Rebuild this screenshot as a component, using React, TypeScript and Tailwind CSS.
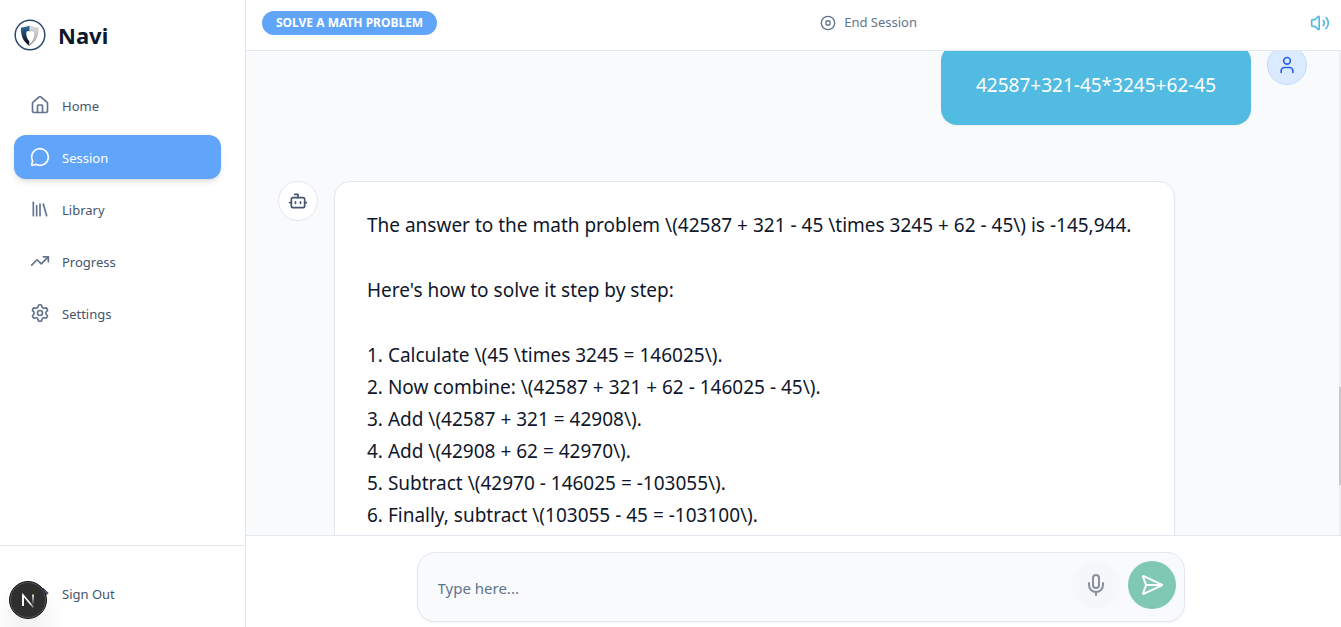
import { useState } from 'react'
import type { LucideIcon } from 'lucide-react'
import {
  Bot,
  CircleStop,
  House,
  Library,
  LogOut,
  MessageCircle,
  Mic,
  SendHorizontal,
  Settings,
  TrendingUp,
  User,
  Volume2,
} from 'lucide-react'

interface NavItem {
  name: string
  icon: LucideIcon
  href: string
}

const NAV_ITEMS: NavItem[] = [
  { name: 'Home', icon: House, href: '#home' },
  { name: 'Session', icon: MessageCircle, href: '#session' },
  { name: 'Library', icon: Library, href: '#library' },
  { name: 'Progress', icon: TrendingUp, href: '#progress' },
  { name: 'Settings', icon: Settings, href: '#settings' },
]

const STEPS = [
  '1. Calculate \\(45 \\times 3245 = 146025\\).',
  '2. Now combine: \\(42587 + 321 + 62 - 146025 - 45\\).',
  '3. Add \\(42587 + 321 = 42908\\).',
  '4. Add \\(42908 + 62 = 42970\\).',
  '5. Subtract \\(42970 - 146025 = -103055\\).',
  '6. Finally, subtract \\(103055 - 45 = -103100\\).',
]

function Logo() {
  return (
    <svg className="w-8 h-8" viewBox="0 0 32 32" fill="none" aria-hidden="true">
      <defs>
        <linearGradient id="shield-left" x1="0" y1="0" x2="0" y2="1">
          <stop offset="0" stopColor="#2f6f9f" />
          <stop offset="0.4" stopColor="#1f4467" />
          <stop offset="0.75" stopColor="#10172f" />
        </linearGradient>
        <linearGradient id="shield-right" x1="0" y1="0" x2="0" y2="1">
          <stop offset="0" stopColor="#dcdcdc" />
          <stop offset="1" stopColor="#a0a0a0" />
        </linearGradient>
      </defs>
      <circle cx="16" cy="16" r="14.8" stroke="#2b4a6b" strokeWidth="1.5" />
      <path d="M15.6 6.6c-2.4 1.2-5.2 1.8-8.6 1.8-.3 7.6 1.6 13.4 8.4 18.6z" fill="url(#shield-left)" />
      <path d="M16 6.6c2.4 1.2 5.2 1.8 8.6 1.8.3 7.6-1.6 13.4-9.2 18.6z" fill="url(#shield-right)" />
      <path
        d="M16 12.8c-1-1-2.600-1-3.600.2-.5 4 .8 7.200 3.300 9.600l-.2 2.600c3.600-3 5.200-7 4.700-12-1-1.300-3.200-1.400-4.200-.4z"
        fill="white"
      />
    </svg>
  )
}

function Sidebar() {
  return (
    <aside className="flex flex-col shrink-0 w-[246px] bg-white border-r border-slate-200">
      <div className="flex items-center gap-3 pl-[14px] pt-[19px]">
        <Logo />
        <span className="text-[22px] leading-8 font-bold text-slate-900">Navi</span>
      </div>

      <nav className="flex flex-col gap-2 pl-[14px] pr-6 mt-8">
        {NAV_ITEMS.map(({ name, icon: Icon, href }) => (
          <a
            key={href}
            href={href}
            className={
              name === 'Session'
                ? 'flex items-center gap-3 h-11 px-4 rounded-xl text-[13px] text-white bg-[#60a5fa] shadow-md'
                : 'flex items-center gap-3 h-11 px-4 rounded-xl text-[13px] text-slate-600 hover:bg-slate-50'
            }
          >
            <Icon className={name === 'Session' ? 'w-5 h-5' : 'w-5 h-5 text-slate-500'} />
            <span className="pt-[3px]">{name}</span>
          </a>
        ))}
      </nav>

      <div className="mt-auto pl-[14px] pr-6 pt-[25px] pb-3 border-t border-slate-200">
        <button className="flex items-center gap-3 w-full h-11 px-4 rounded-xl text-[13px] text-slate-600">
          <LogOut className="w-5 h-5" />
          <span className="pt-[3px]">Sign Out</span>
        </button>
      </div>
    </aside>
  )
}

function Header() {
  return (
    <header className="flex items-center justify-between shrink-0 h-[51px] pl-4 pr-px pb-1 bg-white border-b border-slate-200">
      <span className="px-3.5 rounded-full bg-[#60a5fa] text-xs leading-6 font-bold text-white">
        SOLVE A MATH PROBLEM
      </span>
      <button className="flex items-center gap-2 text-[13px] text-slate-500">
        <CircleStop className="w-4 h-4" />
        End Session
      </button>
      <button className="flex items-center justify-center w-10 h-10 text-[#52bbe1]" aria-label="Toggle sound">
        <Volume2 className="w-5 h-5" />
      </button>
    </header>
  )
}

function Conversation() {
  return (
    <main className="relative flex-1 min-h-0 overflow-hidden pl-8 pr-[34px] bg-slate-50">
      {/* User message, scrolled partly under the header */}
      <div className="flex justify-end gap-4 -mt-1.5">
        <div className="min-w-[310px] px-8 py-6 rounded-2xl bg-[#52bbe1] text-[19px] leading-8 text-center text-white shadow-xs">
          42587+321-45*3245+62-45
        </div>
        <div className="flex items-center justify-center shrink-0 w-10 h-10 rounded-full bg-blue-100 border border-blue-200 text-[#2563eb]">
          <User className="w-5 h-5" />
        </div>
      </div>

      <div className="flex gap-4 mt-14">
        <div className="flex items-center justify-center shrink-0 w-10 h-10 rounded-full bg-white border border-slate-200 text-slate-600">
          <Bot className="w-5 h-5" />
        </div>
        <div className="flex flex-col gap-[33px] w-full max-w-[841px] px-8 pt-[27px] pb-6 rounded-2xl bg-white border border-slate-200 text-[19px] leading-8 text-slate-900 shadow-xs">
          <p>The answer to the math problem \(42587 + 321 - 45 \times 3245 + 62 - 45\) is -145,944.</p>
          <p>Here's how to solve it step by step:</p>
          <div>
            {STEPS.map((step) => (
              <p key={step}>{step}</p>
            ))}
          </div>
        </div>
      </div>

      {/* Scrollbar */}
      <div className="absolute inset-y-0 right-0 w-0.5 bg-[#f0f0f0]">
        <div className="absolute inset-x-0 bottom-[50px] h-[98px] bg-[#c8c8c8]" />
      </div>
    </main>
  )
}

function Composer() {
  const [text, setText] = useState('')

  return (
    <footer className="shrink-0 pl-3.5 pt-4 pb-[5px] bg-white border-t border-slate-200">
      <form
        onSubmit={(e) => e.preventDefault()}
        className="flex items-start gap-2 max-w-3xl mx-auto h-[70px] pl-5 pr-2 pt-2 rounded-[18px] bg-slate-50 border border-slate-200 shadow-xs"
      >
        <input
          type="text"
          value={text}
          onChange={(e) => setText(e.target.value)}
          placeholder="Type here..."
          aria-label="Message"
          className="flex-1 min-w-0 h-[54px] bg-transparent text-[15px] text-slate-900 placeholder:text-slate-500 outline-none"
        />
        <button
          type="button"
          aria-label="Record voice"
          className="flex items-center justify-center w-12 h-12 rounded-full bg-[#f6f7fb] text-[#8a8f9d]"
        >
          <Mic className="w-6 h-6" />
        </button>
        <button
          type="submit"
          aria-label="Send"
          className="flex items-center justify-center w-12 h-12 rounded-full bg-[#7fc8b4] text-white"
        >
          <SendHorizontal className="w-6 h-6" />
        </button>
      </form>
    </footer>
  )
}

// Floating badge in the bottom left corner
function DevBadge() {
  return (
    <button
      aria-label="Open dev tools"
      className="fixed left-[9px] bottom-2 flex items-center justify-center w-[38px] h-[38px] rounded-full bg-[#2f2f2f] border border-[#171717] shadow-[0_16px_32px_-8px_rgba(0,0,0,0.24)]"
    >
      <svg width="36" height="36" viewBox="0 0 36 36" fill="none">
        <defs>
          <linearGradient id="n-diagonal" x1="20" y1="21" x2="25" y2="27" gradientUnits="userSpaceOnUse">
            <stop stopColor="white" />
            <stop offset="1" stopColor="white" stopOpacity="0" />
          </linearGradient>
          <linearGradient id="n-stem" x1="0" y1="13" x2="0" y2="23" gradientUnits="userSpaceOnUse">
            <stop stopColor="white" />
            <stop offset="1" stopColor="white" stopOpacity="0" />
          </linearGradient>
        </defs>
        <circle cx="18" cy="18" r="17.5" stroke="#5a5a5a" strokeWidth="0.8" />
        <path d="M13 24V13l10.5 12.5" stroke="url(#n-diagonal)" strokeWidth="1.6" />
        <path d="M13 24V13" stroke="white" strokeWidth="1.6" />
        <rect x="22.2" y="12.5" width="1.6" height="10" fill="url(#n-stem)" />
      </svg>
    </button>
  )
}

export default function App() {
  return (
    <div className="flex h-screen bg-white font-['Noto_Sans','Open_Sans',sans-serif]">
      <Sidebar />
      <div className="flex flex-col flex-1 min-w-0">
        <Header />
        <Conversation />
        <Composer />
      </div>
      <DevBadge />
    </div>
  )
}
